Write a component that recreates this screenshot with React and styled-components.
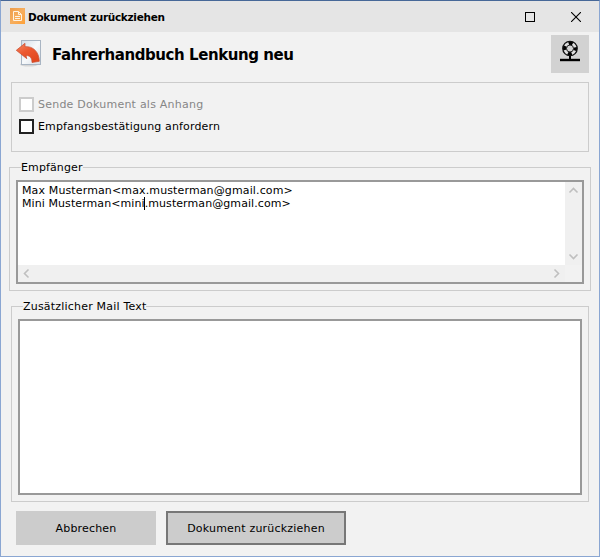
import React from "react";
import styled, { createGlobalStyle } from "styled-components";

const GlobalStyle = createGlobalStyle`
  * {
    box-sizing: border-box;
  }

  body {
    margin: 0;
    font-family: "DejaVu Sans", Verdana, sans-serif;
    font-size: 11px;
    line-height: 13px;
    color: #000;
  }
`;

const Window = styled.div`
  display: flex;
  flex-direction: column;
  width: 600px;
  height: 557px;
  background: #f2f2f2;
  border: 1px solid #8aa6d2;
  border-top-color: #476898;
`;

const TitleBar = styled.div`
  display: flex;
  align-items: center;
  height: 31px;
  padding-left: 9px;
  background: #e5e5e5;

  > svg {
    margin-top: -1px;
  }
`;

const Label = styled.span`
  white-space: nowrap;
  letter-spacing: ${(p) => p.$spacing || 0}px;
`;

const TitleText = styled(Label)`
  flex: 1;
  margin: 2px 0 0 3px;
  font-size: 10.5px;
  font-weight: bold;
`;

const WindowButton = styled.button`
  display: flex;
  align-items: center;
  justify-content: center;
  width: 46px;
  height: 31px;
  padding: 0;
  border: 0;
  background: none;
`;

const Header = styled.div`
  display: flex;
  height: 50px;
  padding: 3px 10px 0 14px;
`;

const Heading = styled.h1`
  flex: 1;
  margin: 10px 0 0 8px;
  font-size: 15px;
  line-height: 20px;
  letter-spacing: ${(p) => p.$spacing}px;
`;

const HelpButton = styled.button`
  width: 38px;
  height: 38px;
  padding: 0;
  border: 0;
  background: #d2d2d2;

  svg {
    display: block;
  }
`;

const Options = styled.div`
  display: flex;
  flex-direction: column;
  gap: 7px;
  height: 70px;
  margin: 0 10px;
  padding: 14px 7px;
  border: 1px solid #ccc;
`;

const CheckRow = styled.label`
  display: flex;
  align-items: center;
  gap: 4px;
  height: 15px;
  color: ${(p) => (p.$disabled ? "#868686" : "#000")};
`;

const CheckBox = styled.span`
  width: 15px;
  height: 15px;
  background: #fff;
  border: 2px solid ${(p) => (p.$disabled ? "#ccc" : "#222")};
`;

const Group = styled.fieldset`
  height: ${(p) => p.$height}px;
  margin: ${(p) => p.$margin};
  padding: 0 6px;
  border: 1px solid #ccc;
`;

const Legend = styled.legend`
  height: 13px;
  margin-left: ${(p) => p.$indent}px;
  padding: 0;
`;

const TextBox = styled.div`
  display: grid;
  grid-template-columns: 1fr ${(p) => (p.$scroll ? "17px" : "")};
  grid-template-rows: 1fr ${(p) => (p.$scroll ? "17px" : "")};
  height: ${(p) => p.$height}px;
  margin-top: 6px;
  background: #fff;
  border: 2px solid #999;
`;

const Lines = styled.div`
  padding: 2px 0 0 4px;
`;

const Line = styled.div`
  height: 13px;
  white-space: nowrap;
  letter-spacing: ${(p) => p.$spacing}px;
`;

const Caret = styled.span`
  display: inline-block;
  width: 1px;
  height: 13px;
  margin-left: -1px;
  vertical-align: top;
  background: #000;
`;

const ScrollBar = styled.div`
  display: flex;
  flex-direction: ${(p) => (p.$vertical ? "column" : "row")};
  justify-content: space-between;
  background: #f0f0f0;

  svg {
    display: block;
  }
`;

const ScrollCorner = styled.div`
  background: #f2f2f2;
`;

const Footer = styled.div`
  display: flex;
  gap: 10px;
  padding: 9px 15px;
`;

const Button = styled.button`
  width: ${(p) => p.$width}px;
  height: 34px;
  padding: 0;
  font: inherit;
  color: #000;
  background: #ccc;
  border: ${(p) => (p.$primary ? "2px solid #777" : "0")};
`;

const angles = { up: 0, right: 90, down: 180, left: 270 };

const Arrow = ({ dir }) => (
  <svg width="17" height="17" viewBox="0 0 17 17">
    <path
      d="M4.500 10.500 8.500 6.500 12.500 10.500"
      transform={`rotate(${angles[dir]} 8.5 8.5)`}
      fill="none"
      stroke="#bfbfbf"
      strokeWidth="1.600"
    />
  </svg>
);

const AppIcon = () => (
  <svg width="15" height="16" viewBox="0 0 15 16">
    <defs>
      <linearGradient id="orange" x1="0" y1="0" x2="1" y2="1">
        <stop offset="0" stopColor="#ee9d4b" />
        <stop offset="0.5" stopColor="#f6ae5e" />
        <stop offset="1" stopColor="#ffa137" />
      </linearGradient>
    </defs>
    <rect width="15" height="16" fill="url(#orange)" />
    <path d="M3.500 3.500h5l3 3v6h-8z" fill="none" stroke="#fff3e2" />
    <path d="M8.500 3.500v3h3M5 8.500h5M5 10.500h5" fill="none" stroke="#fff3e2" />
  </svg>
);

const WithdrawIcon = () => (
  <svg width="29" height="32" viewBox="0 0 29 32">
    <defs>
      <linearGradient id="page" x1="0" y1="0" x2="1" y2="1">
        <stop offset="0" stopColor="#d3dde7" />
        <stop offset="0.5" stopColor="#f7f9fb" />
        <stop offset="1" stopColor="#d5dce4" />
      </linearGradient>
      <linearGradient id="red" x1="0" y1="0" x2="0.6" y2="1">
        <stop offset="0" stopColor="#f58a66" />
        <stop offset="0.5" stopColor="#ec572f" />
        <stop offset="1" stopColor="#e2481f" />
      </linearGradient>
    </defs>
    <ellipse cx="14" cy="29.500" rx="9" ry="2" fill="#d6d6d6" />
    <rect x="6.500" y="5.500" width="19" height="24" fill="url(#page)" stroke="#a9b5c3" />
    <path
      d="M1.300 15.300 10 8.300v3.400c8-0.700 14 5 14.300 14.600l-7.300 1.200c0-4.500-2-7-6-7l0.800 3.200z"
      fill="url(#red)"
      stroke="#c9492b"
      strokeWidth="0.700"
    />
  </svg>
);

const HelpIcon = () => (
  <svg width="38" height="38" viewBox="0 0 38 38">
    <circle cx="19" cy="13.500" r="5.200" fill="none" stroke="#dedede" strokeWidth="4" />
    <circle
      cx="19"
      cy="13.500"
      r="5.200"
      fill="none"
      stroke="#000"
      strokeWidth="4"
      strokeDasharray="4 4.168"
      strokeDashoffset="2"
    />
    <circle cx="19" cy="13.500" r="7.200" fill="none" stroke="#111" strokeWidth="1.300" />
    <circle cx="19" cy="13.500" r="3.500" fill="#d2d2d2" stroke="#222" />
    <path d="M19 21v4" stroke="#000" strokeWidth="2" />
    <path d="M9 25h20" stroke="#000" strokeWidth="2.400" />
  </svg>
);

const App = () => {
  return (
    <>
      <GlobalStyle />
      <Window>
        <TitleBar>
          <AppIcon />
          <TitleText $spacing={-0.3}>Dokument zurückziehen</TitleText>
          <WindowButton>
            <svg width="10" height="10">
              <rect x="0.5" y="0.5" width="9" height="9" fill="none" stroke="#000" />
            </svg>
          </WindowButton>
          <WindowButton>
            <svg width="10" height="10">
              <path d="M0 0 10 10M10 0 0 10" stroke="#000" strokeWidth="1.100" />
            </svg>
          </WindowButton>
        </TitleBar>

        <Header>
          <WithdrawIcon />
          <Heading $spacing={-0.43}>Fahrerhandbuch Lenkung neu</Heading>
          <HelpButton>
            <HelpIcon />
          </HelpButton>
        </Header>

        <Options>
          <CheckRow $disabled>
            <CheckBox $disabled />
            <Label $spacing={0.23}>Sende Dokument als Anhang</Label>
          </CheckRow>
          <CheckRow>
            <CheckBox />
            <Label $spacing={0.14}>Empfangsbestätigung anfordern</Label>
          </CheckRow>
        </Options>

        <Group $height={130} $margin="9px 8px 0">
          <Legend $indent={5}>
            <Label $spacing={0.12}>Empfänger</Label>
          </Legend>
          <TextBox $height={104} $scroll>
            <Lines>
              <Line $spacing={0.13}>Max Musterman&lt;max.musterman@gmail.com&gt;</Line>
              <Line $spacing={0.08}>
                Mini Musterman&lt;mini
                <Caret />
                .musterman@gmail.com&gt;
              </Line>
            </Lines>
            <ScrollBar $vertical>
              <Arrow dir="up" />
              <Arrow dir="down" />
            </ScrollBar>
            <ScrollBar>
              <Arrow dir="left" />
              <Arrow dir="right" />
            </ScrollBar>
            <ScrollCorner />
          </TextBox>
        </Group>

        <Group $height={202} $margin="9px 10px 0">
          <Legend $indent={5}>
            <Label $spacing={0.2}>Zusätzlicher Mail Text</Label>
          </Legend>
          <TextBox $height={176} />
        </Group>

        <Footer>
          <Button $width={140}>
            <Label $spacing={0.17}>Abbrechen</Label>
          </Button>
          <Button $width={180} $primary>
            <Label $spacing={0.2}>Dokument zurückziehen</Label>
          </Button>
        </Footer>
      </Window>
    </>
  );
};

export default App;
